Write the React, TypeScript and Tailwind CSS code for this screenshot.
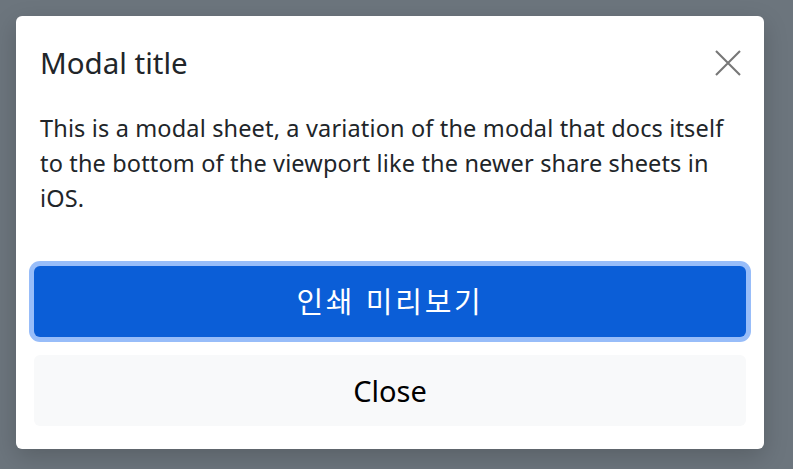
import React from "react";

export default function App() {
  return (
    <div
      className="w-[793px] h-[469px] bg-[#6c757d] p-4"
      style={{ fontFamily: '"Noto Sans", "Noto Sans CJK KR", sans-serif' }}
    >
      <div className="w-[748px] h-[433px] bg-white rounded-md shadow-[0_8px_24px_rgba(0,0,0,0.18)] flex flex-col">
        <div className="flex items-center justify-between pl-6 pr-[20px] pt-[29px]">
          <h5 className="text-[29.5px] leading-[36px] text-[#212529] font-normal">Modal title</h5>
          <button className="w-[32px] h-[32px] flex items-center justify-center text-[#777]">
            <svg width="32" height="32" viewBox="0 0 16 16" fill="none" stroke="currentColor" strokeWidth="1.05">
              <path d="M2 2 L14 14 M14 2 L2 14" />
            </svg>
          </button>
        </div>
        <div className="px-6 pt-[30px]">
          <p className="text-[23.5px] leading-[35px] tracking-[0.15px] text-[#212529]">
            This is a modal sheet, a variation of the modal that docs itself to the bottom of the viewport like the newer share sheets in iOS.
          </p>
        </div>
        <div className="px-[18px] pt-[50px] flex flex-col gap-[18px]">
          <button className="h-[71px] w-full rounded-md bg-[#0b5ed7] text-white text-[29px] tracking-[2.8px] ring-[5px] ring-[#98bdf9] flex items-center justify-center">
            인쇄 미리보기
          </button>
          <button className="h-[71px] w-full rounded-md bg-[#f8f9fa] text-[#000] text-[29px] flex items-center justify-center">
            Close
          </button>
        </div>
      </div>
    </div>
  );
}
